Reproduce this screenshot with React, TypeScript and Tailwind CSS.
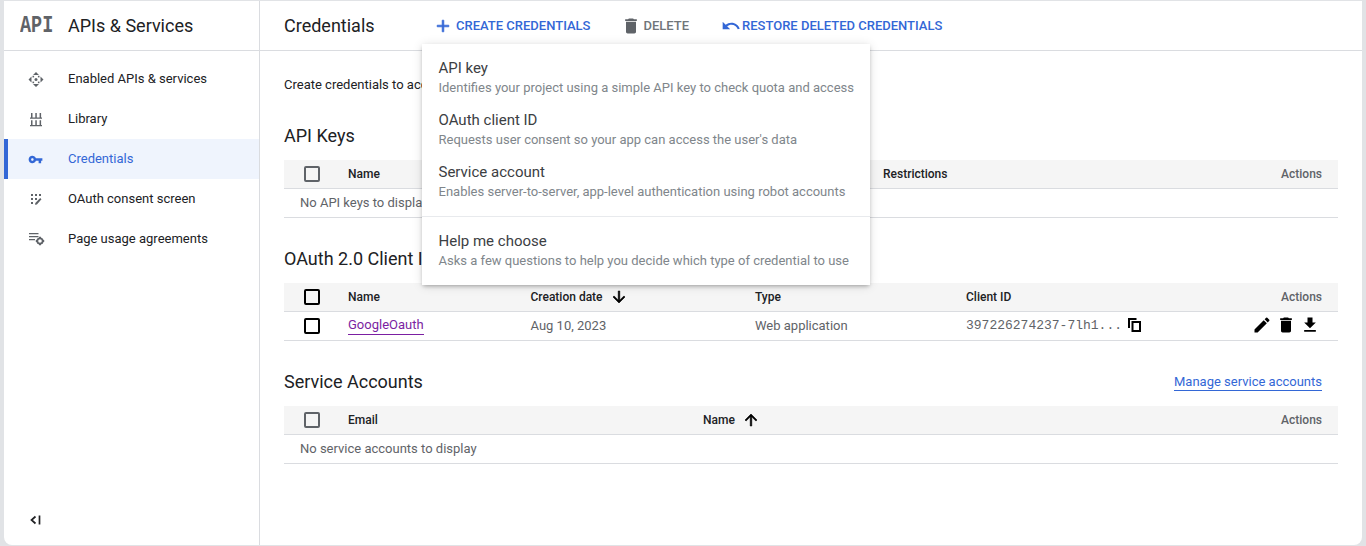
import React from "react";

const Ic = ({ d, size = 18, className = "", bold }: { d: string; size?: number; className?: string; bold?: boolean }) => (
  <svg
    width={size}
    height={size}
    viewBox="0 0 24 24"
    fill="currentColor"
    stroke={bold ? "currentColor" : "none"}
    strokeWidth={bold ? 0.8 : 0}
    className={"shrink-0 " + className}
  >
    <path d={d} />
  </svg>
);

const P = {
  plus: "M19 13h-6v6h-2v-6H5v-2h6V5h2v6h6v2z",
  trash: "M6 19c0 1.1.9 2 2 2h8c1.1 0 2-.9 2-2V7H6v12zM19 4h-3.5l-1-1h-5l-1 1H5v2h14V4z",
  undo: "M12.5 8c-2.65 0-5.05.99-6.9 2.6L2 7v9h9l-3.62-3.62c1.39-1.16 3.16-1.88 5.12-1.88 3.54 0 6.55 2.31 7.6 5.5l2.37-.78C21.08 11.03 17.15 8 12.5 8z",
  key: "M12.65 10C11.83 7.67 9.61 6 7 6c-3.31 0-6 2.69-6 6s2.69 6 6 6c2.61 0 4.83-1.67 5.65-4H17v4h4v-4h2v-4H12.65zM7 14c-1.1 0-2-.9-2-2s.9-2 2-2 2 .9 2 2-.9 2-2 2z",
  pencil: "M3 17.25V21h3.75L17.81 9.94l-3.75-3.75L3 17.25zM20.71 7.04a1 1 0 0 0 0-1.41l-2.34-2.34a1 1 0 0 0-1.41 0l-1.83 1.83 3.75 3.75 1.83-1.83z",
  download: "M19 9h-4V3H9v6H5l7 7 7-7zM5 18v2h14v-2H5z",
  down: "M20 12l-1.41-1.41L13 16.17V4h-2v12.17l-5.58-5.59L4 12l8 8 8-8z",
  up: "M4 12l1.41 1.41L11 7.83V20h2V7.83l5.58 5.59L20 12l-8-8-8 8z",
};

const EnabledIcon = () => (
  <svg width={18} height={18} viewBox="0 0 18 18" fill="#5f6368" className="shrink-0">
    <path d="M8 2l3 3H5zM8 17l-3-3h6zM0.500 9.500l3-3v6zM15.500 9.500l-3 3v-6z" />
    <circle cx="8" cy="9.500" r="1.500" />
    <rect x="4.500" y="5.800" width="1.600" height="1.600" />
    <rect x="9.900" y="5.800" width="1.600" height="1.600" />
    <rect x="4.500" y="11.600" width="1.600" height="1.600" />
    <rect x="9.900" y="11.600" width="1.600" height="1.600" />
  </svg>
);
const LibraryIcon = () => (
  <svg width={18} height={18} viewBox="0 0 18 18" fill="#5f6368" className="shrink-0">
    <path d="M3 3h1.500v4.500H3zM7.300 3h1.500v4.500H7.300zM11.600 3h1.500v4.500h-1.500zM2 7.500h12v1.300H2zM3 10.300h1.500V15H3zM7.300 10.300h1.500V15H7.300zM11.600 10.300h1.500V15h-1.500zM2 15h12v1.300H2z" />
  </svg>
);
const ConsentIcon = () => (
  <svg width={18} height={18} viewBox="0 0 18 18" fill="#5f6368" className="shrink-0">
    <path d="M3 4h2v2H3zM7 4h2v2H7zM11 4h2v2h-2zM3 8h2v2H3zM7 8h2v2H7zM3 12h2v2H3zM12.200 8l1.300 1.200-4.600 5.300-1.900.3.300-1.800z" />
  </svg>
);
const UsageIcon = () => (
  <svg width={18} height={18} viewBox="0 0 18 18" fill="#5f6368" className="shrink-0">
    <path d="M1 3h9.500v1.300H1zM1 6h9.500v1.300H1zM1 9h6v1.300H1z" />
    <circle cx="12" cy="11" r="2.700" fill="none" stroke="#5f6368" strokeWidth="1.800" />
    <path d="M11 6.800h2v1.500h-2zM11 13.700h2v1.500h-2zM7.800 10h1.500v2H7.800zM14.700 10h1.500v2h-1.500z" />
  </svg>
);
const CopyIcon = () => (
  <svg width={13} height={14} viewBox="0 0 13 14" fill="none" stroke="#000" strokeWidth="2" className="shrink-0">
    <path d="M1 10V1h7.500" />
    <rect x="4.500" y="4" width="7.500" height="9" />
  </svg>
);

const NavItem = ({ icon, label, active }: { icon: React.ReactNode; label: string; active?: boolean }) => (
  <div
    className={
      "flex h-10 items-center " +
      (active ? "border-l-4 border-[#3367d6] bg-[#eff4fd] pl-5 text-[#3367d6]" : "pl-6 text-[#202124]")
    }
  >
    <span className="flex w-[40px]">{icon}</span>
    <span className="text-[13px]">{label}</span>
  </div>
);

const Checkbox = ({ dark }: { dark?: boolean }) => (
  <span className={"block h-4 w-4 rounded-[2px] border-2 " + (dark ? "border-black" : "border-[#5f6368]")} />
);

const Th = ({ children, className = "" }: { children: React.ReactNode; className?: string }) => (
  <div className={"absolute top-0 flex h-full items-center text-xs font-medium " + className}>{children}</div>
);

const MenuItem = ({ title, desc }: { title: string; desc: string }) => (
  <div className="flex h-[52px] flex-col justify-center pl-[16.5px] pr-4">
    <div className="text-[15px] leading-5 text-[#3c4043]">{title}</div>
    <div className="text-[13px] leading-5 text-[#80868b]">{desc}</div>
  </div>
);

export default function App() {
  return (
    <div className="relative h-[546px] w-[1366px] overflow-hidden bg-[#e1e3e6] pb-px pl-1 pr-1 pt-px font-['Roboto',sans-serif]">
      <div className="flex h-full overflow-hidden rounded-b-lg bg-white">
        <aside className="flex w-[256px] shrink-0 flex-col border-r border-[#dadce0]">
          <div className="flex h-[50px] shrink-0 items-center border-b border-[#dadce0] pl-4">
            <span className="w-12 origin-left scale-x-[0.77] whitespace-nowrap font-['Liberation_Mono',monospace] text-[24px] font-bold leading-none text-[#5f6368]">API</span>
            <span className="text-lg text-[#202124]">APIs &amp; Services</span>
          </div>
          <nav className="flex flex-1 flex-col pt-2">
            <NavItem icon={<EnabledIcon />} label="Enabled APIs & services" />
            <NavItem icon={<LibraryIcon />} label="Library" />
            <NavItem icon={<Ic d={P.key} size={15} />} label="Credentials" active />
            <NavItem icon={<ConsentIcon />} label="OAuth consent screen" />
            <NavItem icon={<UsageIcon />} label="Page usage agreements" />
          </nav>
          <div className="flex h-[50px] shrink-0 items-start pl-[25px] pt-[18px]">
            <svg width="14" height="14" viewBox="0 0 14 14" fill="none" stroke="#202124" strokeWidth="1.700" className="shrink-0">
              <path d="M6.500 3.500L2.500 7l4 3.500M10.500 2.500v9" />
            </svg>
          </div>
        </aside>

        <main className="min-w-0 flex-1">
          <header className="flex h-[50px] items-center border-b border-[#dadce0] pl-6">
            <h1 className="w-[149px] text-lg font-normal text-[#202124]">Credentials</h1>
            <div className="flex items-center text-[13px] font-medium uppercase text-[#3367d6]">
              <Ic d={P.plus} size={20} bold className="mr-[3px]" />
              <span>Create credentials</span>
              <Ic d={P.trash} size={20} className="ml-[31px] mr-[2px] text-[#5f6368]" />
              <span className="text-[#70757a]">Delete</span>
              <Ic d={P.undo} size={20} className="ml-[32px] mr-[1px]" />
              <span>Restore deleted credentials</span>
            </div>
          </header>

          <div className="px-6">
            <p className="mt-[24px] text-[13px] leading-5 text-[#202124]">Create credentials to access your enabled APIs</p>

            <h2 className="mt-[29px] text-lg font-normal leading-6 text-[#202124]">API Keys</h2>
            <div className="relative mt-[12px] h-[29px] border-b border-[#dadce0] bg-[#f5f5f5]">
              <div className="absolute left-5 top-[6px]"><Checkbox /></div>
              <Th className="left-16 text-[#202124]">Name</Th>
              <Th className="left-[599px] text-[#202124]">Restrictions</Th>
              <Th className="right-4 text-[#5f6368]">Actions</Th>
            </div>
            <div className="flex h-[29px] items-center border-b border-[#dadce0] pl-4 text-[13px] text-[#5f6368]">No API keys to display</div>

            <h2 className="mt-[29px] text-lg font-normal leading-6 text-[#202124]">OAuth 2.0 Client IDs</h2>
            <div className="relative mt-[12px] h-[29px] border-b border-[#dadce0] bg-[#f5f5f5]">
              <div className="absolute left-5 top-[6px]"><Checkbox dark /></div>
              <Th className="left-16 text-[#202124]">Name</Th>
              <Th className="left-[246.500px] text-[#202124]">Creation date<Ic d={P.down} size={18} bold className="ml-[7px] text-black" /></Th>
              <Th className="left-[471px] text-[#202124]">Type</Th>
              <Th className="left-[682px] text-[#202124]">Client ID</Th>
              <Th className="right-4 text-[#5f6368]">Actions</Th>
            </div>
            <div className="relative h-[29px] border-b border-[#dadce0] text-[13px] text-[#5f6368]">
              <div className="absolute left-5 top-[6px]"><Checkbox dark /></div>
              <a className="absolute left-16 top-[4px] border-b border-[#7b1fa2] leading-[18px] text-[#7b1fa2]">GoogleOauth</a>
              <span className="absolute left-[246.500px] top-[5px] leading-[18px]">Aug 10, 2023</span>
              <span className="absolute left-[471px] top-[5px] leading-[18px]">Web application</span>
              <span className="absolute left-[682px] top-[5px] font-['Liberation_Mono',monospace] text-[13px] leading-[18px]">397226274237-7lh1...</span>
              <div className="absolute left-[844px] top-[6px]"><CopyIcon /></div>
              <div className="absolute right-[18px] top-[3px] flex gap-1 text-black">
                <Ic d={P.pencil} size={20} />
                <Ic d={P.trash} size={20} />
                <Ic d={P.download} size={20} />
              </div>
            </div>

            <div className="mt-[29px] flex items-center justify-between">
              <h2 className="text-lg font-normal leading-6 text-[#202124]">Service Accounts</h2>
              <a className="mr-4 border-b border-[#3367d6] text-[13px] leading-[16px] text-[#3367d6]">Manage service accounts</a>
            </div>
            <div className="relative mt-[12px] h-[29px] border-b border-[#dadce0] bg-[#f5f5f5]">
              <div className="absolute left-5 top-[6px]"><Checkbox /></div>
              <Th className="left-16 text-[#202124]">Email</Th>
              <Th className="left-[419px] text-[#202124]">Name<Ic d={P.up} size={18} bold className="ml-[7px] text-black" /></Th>
              <Th className="right-4 text-[#5f6368]">Actions</Th>
            </div>
            <div className="flex h-[29px] items-center border-b border-[#dadce0] pl-4 text-[13px] text-[#5f6368]">No service accounts to display</div>
          </div>
        </main>
      </div>

      <div className="absolute left-[422px] top-[44px] w-[448px] bg-white shadow-[0_2px_4px_-1px_rgba(0,0,0,0.3),0_1px_10px_0_rgba(0,0,0,0.12)]">
        <div className="pt-2">
          <MenuItem title="API key" desc="Identifies your project using a simple API key to check quota and access" />
          <MenuItem title="OAuth client ID" desc="Requests user consent so your app can access the user's data" />
          <MenuItem title="Service account" desc="Enables server-to-server, app-level authentication using robot accounts" />
        </div>
        <div className="mt-2 border-t border-[#e8eaed] py-2">
          <MenuItem title="Help me choose" desc="Asks a few questions to help you decide which type of credential to use" />
        </div>
      </div>
    </div>
  );
}
